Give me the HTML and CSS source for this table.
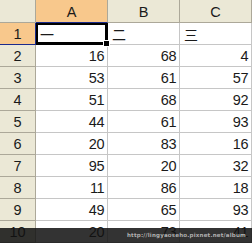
FILE: index.html
```html
<!DOCTYPE html>
<html>
<head>
<meta charset="utf-8">
<link rel="stylesheet" href="styles.css">
</head>
<body>
<div class="sheet">
  <div class="grid">
    <div class="hd corner"></div>
    <div class="hd col sel">A</div>
    <div class="hd col">B</div>
    <div class="hd col">C</div>

    <div class="hd row sel">1</div>
    <div class="c txt active">一<span class="handle"></span></div>
    <div class="c txt">二</div>
    <div class="c txt">三</div>

    <div class="hd row">2</div><div class="c">16</div><div class="c">68</div><div class="c">4</div>
    <div class="hd row">3</div><div class="c">53</div><div class="c">61</div><div class="c">57</div>
    <div class="hd row">4</div><div class="c">51</div><div class="c">68</div><div class="c">92</div>
    <div class="hd row">5</div><div class="c">44</div><div class="c">61</div><div class="c">93</div>
    <div class="hd row">6</div><div class="c">20</div><div class="c">83</div><div class="c">16</div>
    <div class="hd row">7</div><div class="c">95</div><div class="c">20</div><div class="c">32</div>
    <div class="hd row">8</div><div class="c">11</div><div class="c">86</div><div class="c">18</div>
    <div class="hd row">9</div><div class="c">49</div><div class="c">65</div><div class="c">93</div>
    <div class="hd row">10</div><div class="c">20</div><div class="c">73</div><div class="c">41</div>
  </div>
  <div class="mark">http://lingyaoseho.pixnet.net/album</div>
</div>
</body>
</html>
```
FILE: styles.css
```css
html, body {
  margin: 0;
  padding: 0;
  background: #fff;
}
.sheet {
  position: relative;
  width: 252px;
  height: 243px;
  overflow: hidden;
  font-family: "Liberation Sans", Arial, "Noto Sans CJK TC", sans-serif;
  font-size: 14.5px;
  letter-spacing: -0.5px;
  color: #1a1a1a;
}
.grid {
  display: grid;
  grid-template-columns: 36px 72px 72px 72px;
  grid-template-rows: 23px repeat(10, 22px);
}
.hd {
  box-sizing: border-box;
  background: #ebe8d6;
  border-right: 1px solid #aca899;
  border-bottom: 1px solid #aca899;
  display: flex;
  align-items: center;
  justify-content: center;
  padding-top: 1px;
  letter-spacing: 0;
}
.hd.sel {
  background: #f8c88c;
}
.hd.col.sel {
  border-bottom-color: #1a2a8c;
}
.hd.row.sel {
  border-right-color: #1a2a8c;
  border-bottom-color: #1a2a8c;
}
.c {
  box-sizing: border-box;
  border-right: 1px solid #c6c6c6;
  border-bottom: 1px solid #c6c6c6;
  display: flex;
  align-items: center;
  justify-content: flex-end;
  padding: 1px 3px 0 3px;
}
.c.txt {
  justify-content: flex-start;
  padding-left: 4px;
  font-family: "Noto Sans CJK TC", sans-serif;
  font-size: 14px;
  letter-spacing: 0;
}
.active {
  position: relative;
  border-bottom-color: #1a2a8c;
}
.active::after {
  content: "";
  position: absolute;
  left: 0;
  top: 0;
  right: -1px;
  bottom: -1px;
  border: 2px solid #000;
  border-bottom-width: 3px;
  border-right-width: 3px;
  box-sizing: border-box;
}
.handle {
  position: absolute;
  right: -3px;
  bottom: -3px;
  width: 5px;
  height: 5px;
  background: #000;
  border: 1px solid #fff;
  z-index: 2;
}
.mark {
  position: absolute;
  left: 0;
  right: 0;
  bottom: 0;
  height: 15px;
  background: rgba(18, 18, 18, 0.86);
  color: #b0b0b0;
  font-family: "DejaVu Sans", sans-serif;
  font-size: 5.5px;
  font-weight: bold;
  line-height: 15px;
  text-align: right;
  padding-right: 6px;
  letter-spacing: 0.2px;
}
```
